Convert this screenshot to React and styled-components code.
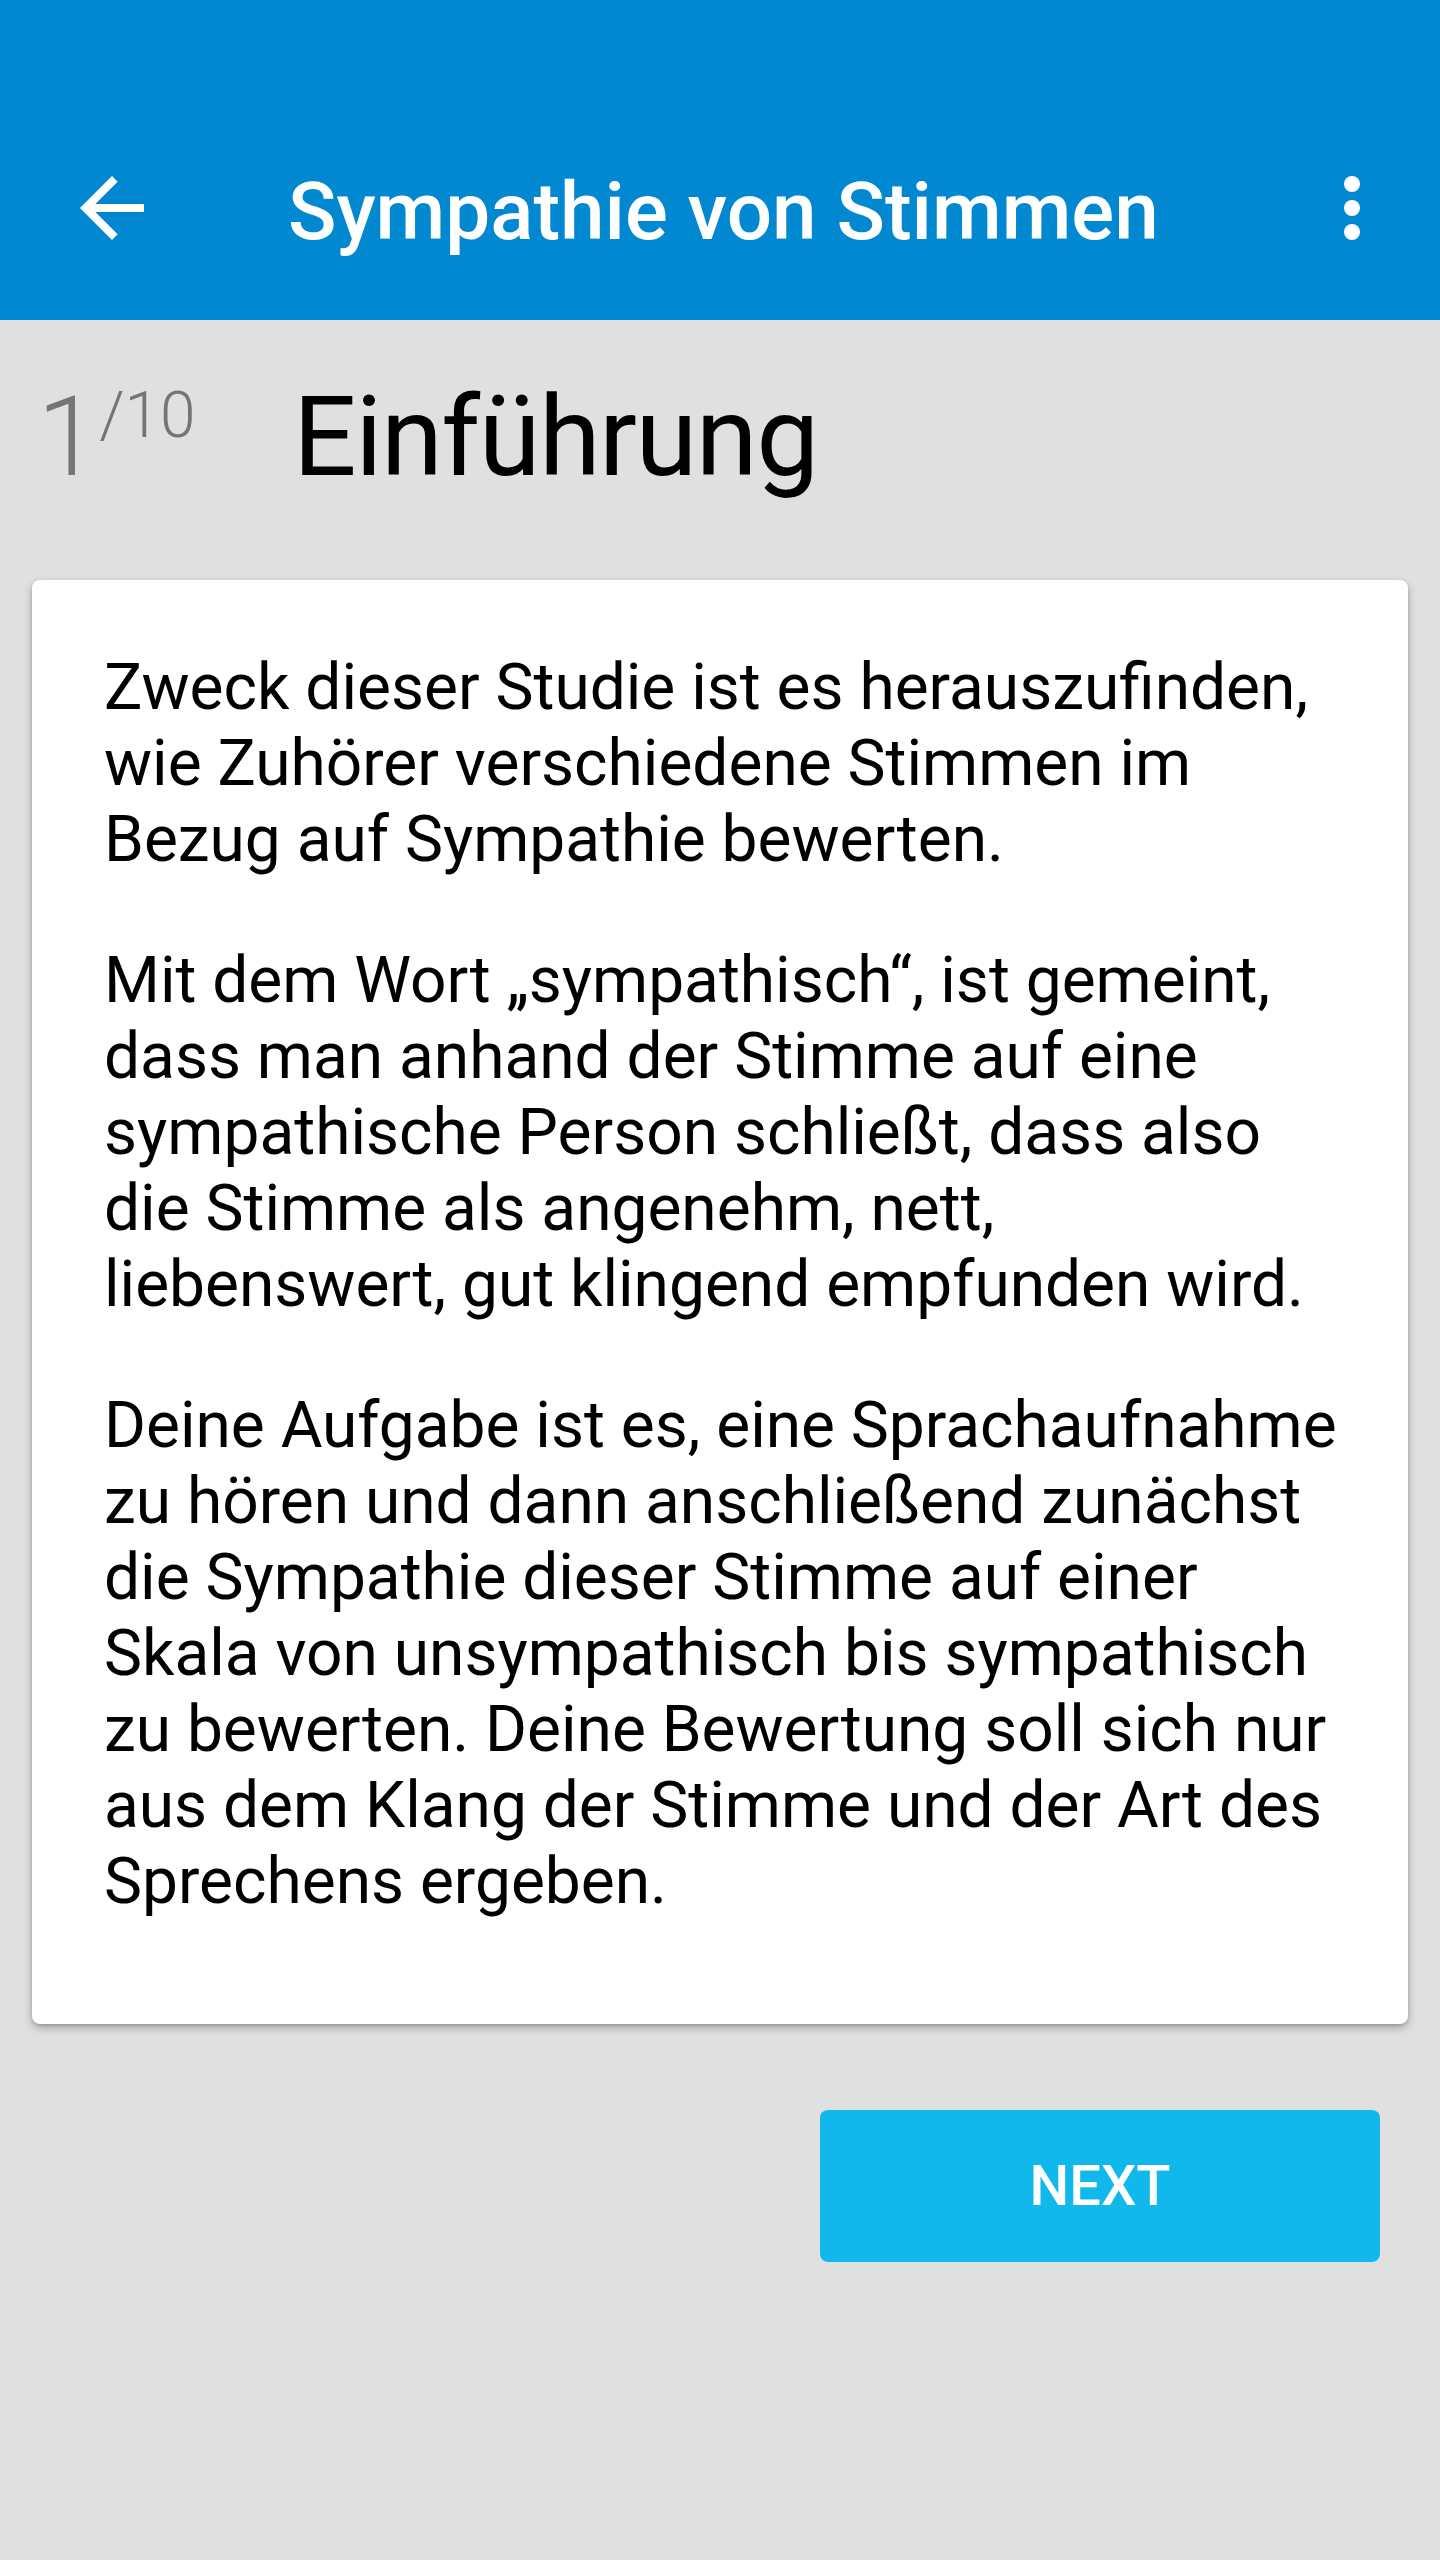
import React from "react";
import styled, { createGlobalStyle } from "styled-components";

const colors = {
  primary: "#0288D1",
  accent: "#10B8EC",
  page: "#E0E0E0",
  white: "#FFFFFF",
  grey: "#757575",
};

const GlobalStyle = createGlobalStyle`
  html, body {
    margin: 0;
    padding: 0;
    background: ${colors.page};
  }
  body {
    font-family: Roboto, "Noto Sans", Arial, sans-serif;
    -webkit-font-smoothing: antialiased;
  }
`;

const Screen = styled.div`
  width: 1440px;
  min-height: 2560px;
  background: ${colors.page};
  display: flex;
  flex-direction: column;
`;

const AppBar = styled.header`
  background: ${colors.primary};
  padding-top: 96px;
  height: 224px;
  display: flex;
  align-items: center;
  color: ${colors.white};
`;

const IconButton = styled.div`
  width: 96px;
  height: 96px;
  display: flex;
  align-items: center;
  justify-content: center;
  margin-left: ${props => props.left || 0}px;
  margin-right: ${props => props.right || 0}px;
  & svg {
    width: 96px;
    height: 96px;
    fill: ${colors.white};
  }
`;

const Title = styled.h1`
  flex: 1;
  margin: 0 0 0 128px;
  padding-top: 8px;
  font-size: 80px;
  font-weight: 500;
  line-height: normal;
  white-space: nowrap;
`;

const Header = styled.div`
  display: flex;
  align-items: baseline;
  padding: 51px 0 78px 37px;
  line-height: normal;
`;

const Counter = styled.div`
  width: 256px;
  color: ${colors.grey};
  font-weight: 300;
  font-size: 112px;
  & sup {
    font-size: 64px;
    vertical-align: 38px;
    line-height: 0;
  }
`;

const Heading = styled.h2`
  margin: 0;
  font-size: 112px;
  font-weight: 400;
  letter-spacing: -1.5px;
  color: #000;
`;

const Card = styled.section`
  margin: 0 32px;
  background: ${colors.white};
  border-radius: 8px;
  box-shadow: 0 4px 8px rgba(0, 0, 0, 0.28), 0 1px 3px rgba(0, 0, 0, 0.12);
  padding: 70px 58px 104px 72px;
`;

const Para = styled.p`
  margin: 0 0 65px;
  font-size: 64px;
  line-height: 76px;
  color: #000;
  &:last-child {
    margin-bottom: 0;
  }
`;

const Actions = styled.div`
  display: flex;
  justify-content: flex-end;
  padding: 86px 60px 0 0;
`;

const Button = styled.button`
  width: 560px;
  height: 152px;
  border: none;
  border-radius: 8px;
  background: ${colors.accent};
  color: ${colors.white};
  font-family: Roboto, "Noto Sans", Arial, sans-serif;
  font-size: 56px;
  font-weight: 500;
  text-transform: uppercase;
  cursor: pointer;
  &:hover {
    opacity: 0.9;
  }
`;

const BackIcon = () => (
  <svg viewBox="0 0 24 24">
    <path d="M20 11H7.83l5.59-5.59L12 4l-8 8 8 8 1.41-1.41L7.83 13H20v-2z" />
  </svg>
);

const MoreIcon = () => (
  <svg viewBox="0 0 24 24">
    <circle cx="12" cy="6" r="2" />
    <circle cx="12" cy="12" r="2" />
    <circle cx="12" cy="18" r="2" />
  </svg>
);

const paragraphs = [
  "Zweck dieser Studie ist es herauszufinden, wie Zuhörer verschiedene Stimmen im Bezug auf Sympathie bewerten.",
  "Mit dem Wort \u201Esympathisch\u201C, ist gemeint, dass man anhand der Stimme auf eine sympathische Person schließt, dass also die Stimme als angenehm, nett, liebenswert, gut klingend empfunden wird.",
  "Deine Aufgabe ist es, eine Sprachaufnahme zu hören und dann anschließend zunächst die Sympathie dieser Stimme auf einer Skala von unsympathisch bis sympathisch zu bewerten. Deine Bewertung soll sich nur aus dem Klang der Stimme und der Art des Sprechens ergeben.",
];

const App = () => (
  <Screen>
    <GlobalStyle />
    <AppBar>
      <IconButton left={64}>
        <BackIcon />
      </IconButton>
      <Title>Sympathie von Stimmen</Title>
      <IconButton right={40}>
        <MoreIcon />
      </IconButton>
    </AppBar>

    <Header>
      <Counter>
        1<sup>/10</sup>
      </Counter>
      <Heading>Einführung</Heading>
    </Header>

    <Card>
      {paragraphs.map((text, i) => (
        <Para key={i}>{text}</Para>
      ))}
    </Card>

    <Actions>
      <Button>Next</Button>
    </Actions>
  </Screen>
);

export default App;
